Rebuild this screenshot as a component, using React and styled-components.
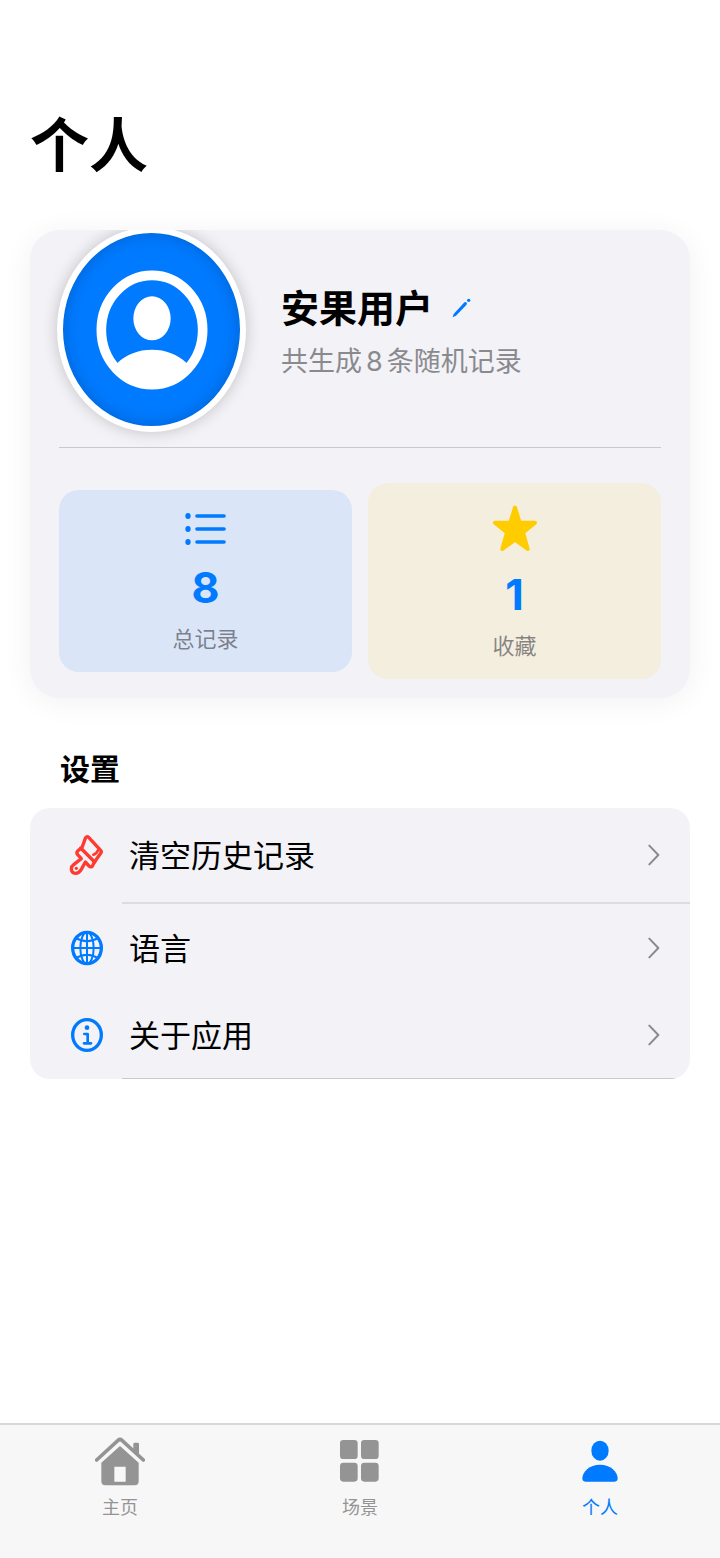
import React from 'react';
import styled, { createGlobalStyle } from 'styled-components';

const GlobalStyle = createGlobalStyle`
  * {
    box-sizing: border-box;
  }

  body {
    margin: 0;
    background-color: #ffffff;
    color: #000000;
    font-family: Inter, 'Noto Sans CJK SC', sans-serif;
  }

  button {
    font: inherit;
    color: inherit;
    background: none;
    border: none;
    padding: 0;
    cursor: pointer;
  }

  svg {
    display: block;
    flex-shrink: 0;
  }
`;

// Styled Components
const Page = styled.div`
  min-height: 100vh;
  display: flex;
  flex-direction: column;
`;

const Content = styled.main`
  flex: 1;
  padding: 100px 30px 40px;
`;

const Title = styled.h1`
  margin: 0 0 38px;
  font-size: 59px;
  line-height: 92px;
  font-weight: 700;
`;

const ProfileCard = styled.section`
  background-color: #f2f2f7;
  border-radius: 30px;
  box-shadow: 0 4px 30px rgba(0, 0, 0, 0.06);
  overflow: hidden;
`;

const ProfileRow = styled.div`
  height: 217px;
  padding: 0 27px 18px;
  display: flex;
  align-items: center;
  gap: 35px;
`;

const Avatar = styled.div`
  width: 189px;
  height: 205px;
  flex-shrink: 0;
  display: flex;
  align-items: center;
  justify-content: center;
  border: 6px solid #ffffff;
  border-radius: 50%;
  background-color: #007aff;
  box-shadow: 0 0 16px rgba(0, 0, 0, 0.2), inset 0 0 16px rgba(0, 0, 0, 0.2);
`;

const ProfileInfo = styled.div`
  display: flex;
  flex-direction: column;
  gap: 13px;
  padding-top: 6px;
`;

const NameRow = styled.div`
  display: flex;
  align-items: center;
  gap: 19px;
`;

const Name = styled.h2`
  margin: 0;
  font-size: 38px;
  line-height: 46px;
  font-weight: 700;
`;

const Summary = styled.p`
  margin: 0;
  font-size: 27px;
  line-height: 36px;
  color: #8a8a8e;
`;

const Count = styled.span`
  padding: 0 4px;
`;

const Divider = styled.hr`
  height: 1px;
  margin: 0 29px;
  border: none;
  background-color: #c8c8cd;
`;

const Stats = styled.div`
  display: grid;
  grid-template-columns: 1fr 1fr;
  align-items: center;
  gap: 16px;
  padding: 35px 29px 19px;
`;

const StatTile = styled.div`
  display: flex;
  flex-direction: column;
  align-items: center;
  gap: 14px;
  padding: 22px 0;
  border-radius: 20px;
  background-color: ${(props) => props.$background};
`;

const StatValue = styled.strong`
  font-size: 43px;
  line-height: 54px;
  font-weight: 700;
  color: #007aff;
`;

const StatLabel = styled.span`
  font-size: 22px;
  line-height: 22px;
  color: rgba(60, 60, 67, 0.6);
`;

const SectionTitle = styled.h3`
  margin: 0;
  padding: 50px 30px 18px;
  font-size: 30px;
  line-height: 42px;
  font-weight: 700;
`;

const SettingsList = styled.ul`
  list-style: none;
  margin: 0;
  padding: 0;
  border-radius: 20px;
  background-color: #f2f2f7;
  overflow: hidden;
`;

const SettingsItem = styled.li`
  &::after {
    content: '';
    display: ${(props) => (props.$line ? 'block' : 'none')};
    height: ${(props) => props.$line}px;
    margin-left: 92px;
    background-color: ${(props) => (props.$line > 1 ? '#dcdce1' : '#c8c8cd')};
  }
`;

const SettingsButton = styled.button`
  width: 100%;
  height: ${(props) => (props.$tall ? 94 : 87)}px;
  padding: 0 30px 0 37px;
  display: flex;
  align-items: center;
  gap: 22px;
  font-size: 31px;
  line-height: 40px;
  text-align: left;
`;

const IconBox = styled.span`
  width: 40px;
  display: flex;
  justify-content: center;
`;

const SettingsLabel = styled.span`
  flex: 1;
  padding-top: 2px;
`;

const TabBar = styled.nav`
  height: 135px;
  display: grid;
  grid-template-columns: repeat(3, 1fr);
  border-top: 2px solid #d8d8d8;
  background-color: #f7f7f7;
`;

const Tab = styled.a`
  padding-top: 11px;
  display: flex;
  flex-direction: column;
  align-items: center;
  gap: 12px;
  font-size: 18px;
  line-height: 20px;
  text-decoration: none;
  color: ${(props) => (props.$active ? '#007aff' : '#949494')};
`;

const TabIcon = styled.span`
  height: 50px;
  display: flex;
  align-items: center;
`;

// Icon Components
const UserCircleIcon = () => (
  <svg width="112" height="120" viewBox="226 163 336 360" fill="#ffffff">
    <ellipse cx="394" cy="343" rx="152" ry="164" fill="none" stroke="#ffffff" strokeWidth="29" />
    <ellipse cx="394" cy="308" rx="56" ry="66" />
    <path d="M280 450L291 441C318 416 352 402 394 402S470 416 497 441L508 450Q460 510 394 510T280 450Z" />
  </svg>
);

const PencilIcon = () => (
  <svg width="19" height="20" viewBox="576 81 57 60" fill="#007aff">
    <path d="M578 139L581 129L612 95Q616 91 619 94Q623 98 619 102L588 134Z" />
    <circle cx="626" cy="88" r="5" />
  </svg>
);

const ListIcon = () => (
  <svg width="41" height="34" viewBox="436 127 123 102" fill="#007aff">
    <ellipse cx="445" cy="139" rx="8" ry="9" />
    <ellipse cx="445" cy="178" rx="8" ry="9" />
    <ellipse cx="445" cy="217" rx="8" ry="9" />
    <path d="M472 139H553M472 178H553M472 217H553" stroke="#007aff" strokeWidth="11" strokeLinecap="round" />
  </svg>
);

const StarIcon = () => (
  <svg width="46" height="48" viewBox="423 108 138 144">
    <path
      d="M492 116L506 161H552L516 190L530 240L492 212L454 240L468 190L432 161H478Z"
      fill="#ffcc00"
      stroke="#ffcc00"
      strokeWidth="12"
      strokeLinejoin="round"
    />
  </svg>
);

const BrushIcon = () => (
  <svg width="42" height="48" viewBox="0 0 126 144" fill="none" stroke="#ff3b30" strokeWidth="10" strokeLinejoin="round" strokeLinecap="round">
    <path d="M68 19L104 58Q108 62 104 67L84 95L80 104Q75 111 69 105L58 93L46 115Q39 127 29 127Q16 126 16 113Q16 106 23 101L46 83L35 71Q30 65 36 59L48 50L58 22Q62 14 68 19Z" />
    <path d="M44 51L86 93" />
    <path d="M82 71Q92 68 97 56" strokeWidth="8" />
    <circle cx="31" cy="112" r="5" fill="#ff3b30" stroke="none" />
  </svg>
);

const GlobeIcon = () => (
  <svg width="34" height="36" viewBox="150 56 102 108" fill="none" stroke="#007aff" strokeWidth="6">
    <ellipse cx="201" cy="110" rx="43" ry="47" strokeWidth="10" />
    <ellipse cx="201" cy="110" rx="20" ry="47" />
    <path d="M201 62V158M156 110H246M166 79Q201 101 236 79M166 141Q201 119 236 141" />
  </svg>
);

const InfoIcon = () => (
  <svg width="34" height="36" viewBox="150 320 102 108" fill="none" stroke="#007aff" strokeLinecap="round" strokeLinejoin="round">
    <ellipse cx="201" cy="374" rx="43" ry="46" strokeWidth="10" />
    <circle cx="201" cy="352" r="7" fill="#007aff" stroke="none" />
    <path d="M193 371H203V399M192 399H213" strokeWidth="8" />
  </svg>
);

const ChevronIcon = () => (
  <svg width="12" height="22" viewBox="144 162 36 66" fill="none" stroke="#8a8a8e" strokeWidth="6" strokeLinecap="round" strokeLinejoin="round">
    <path d="M148 167L175 195L148 223" />
  </svg>
);

const HomeIcon = () => (
  <svg width="50" height="49" viewBox="105 80 150 147" fill="currentColor">
    <path d="M110 149L174 90Q180 85 186 90L250 149" fill="none" stroke="currentColor" strokeWidth="11" strokeLinecap="round" />
    <path d="M220 101Q220 97 224 97H233Q237 97 237 101V139L220 123Z" />
    <path fillRule="evenodd" d="M180 107L236 157V213Q236 225 224 225H136Q124 225 124 213V157ZM163 169V214H197V169Z" />
  </svg>
);

const GridIcon = () => (
  <svg width="40" height="42" viewBox="841 90 120 126" fill="currentColor">
    <rect x="841" y="90" width="53" height="57" rx="10" />
    <rect x="904" y="90" width="53" height="57" rx="10" />
    <rect x="841" y="158" width="53" height="57" rx="10" />
    <rect x="904" y="158" width="53" height="57" rx="10" />
  </svg>
);

const PersonIcon = () => (
  <svg width="36" height="42" viewBox="545 91 108 126" fill="currentColor">
    <ellipse cx="599" cy="123" rx="26" ry="30" />
    <path d="M546 206C546 186 568 165 599 165S652 186 652 206Q652 216 643 216H555Q546 216 546 206Z" />
  </svg>
);

const stats = [
  { key: 'total', value: 8, label: '总记录', icon: <ListIcon />, background: '#dae5f7' },
  { key: 'favorite', value: 1, label: '收藏', icon: <StarIcon />, background: '#f4eedf' },
];

const settings = [
  { key: 'clear', label: '清空历史记录', icon: <BrushIcon />, tall: true, line: 2 },
  { key: 'language', label: '语言', icon: <GlobeIcon /> },
  { key: 'about', label: '关于应用', icon: <InfoIcon />, line: 1 },
];

const tabs = [
  { key: 'home', label: '主页', icon: <HomeIcon /> },
  { key: 'scene', label: '场景', icon: <GridIcon /> },
  { key: 'profile', label: '个人', icon: <PersonIcon /> },
];

const App = () => {
  const activeTab = 'profile';

  return (
    <Page lang="zh-CN">
      <GlobalStyle />
      <Content>
        <Title>个人</Title>
        <ProfileCard>
          <ProfileRow>
            <Avatar>
              <UserCircleIcon />
            </Avatar>
            <ProfileInfo>
              <NameRow>
                <Name>安果用户</Name>
                <button type="button" aria-label="编辑">
                  <PencilIcon />
                </button>
              </NameRow>
              <Summary>
                共生成<Count>8</Count>条随机记录
              </Summary>
            </ProfileInfo>
          </ProfileRow>
          <Divider />
          <Stats>
            {stats.map((stat) => (
              <StatTile key={stat.key} $background={stat.background}>
                {stat.icon}
                <StatValue>{stat.value}</StatValue>
                <StatLabel>{stat.label}</StatLabel>
              </StatTile>
            ))}
          </Stats>
        </ProfileCard>

        <SectionTitle>设置</SectionTitle>
        <SettingsList>
          {settings.map((item) => (
            <SettingsItem key={item.key} $line={item.line}>
              <SettingsButton type="button" $tall={item.tall}>
                <IconBox>{item.icon}</IconBox>
                <SettingsLabel>{item.label}</SettingsLabel>
                <ChevronIcon />
              </SettingsButton>
            </SettingsItem>
          ))}
        </SettingsList>
      </Content>

      <TabBar>
        {tabs.map((tab) => (
          <Tab key={tab.key} href={`#${tab.key}`} $active={activeTab === tab.key}>
            <TabIcon>{tab.icon}</TabIcon>
            {tab.label}
          </Tab>
        ))}
      </TabBar>
    </Page>
  );
};

export default App;
